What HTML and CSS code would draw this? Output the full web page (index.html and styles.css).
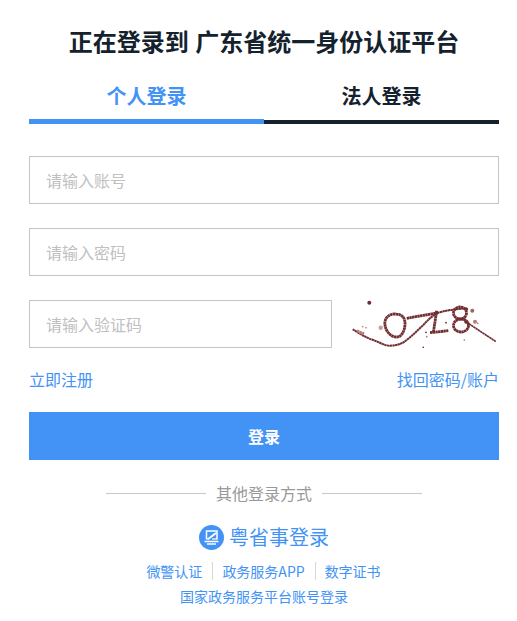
FILE: index.html
```html
<!DOCTYPE html>
<html lang="zh-CN">
<head>
  <meta charset="UTF-8" />
  <title>统一身份认证平台</title>
  <link rel="stylesheet" href="styles.css">
</head>
<body>
  <div class="login">
    <h1 class="title">正在登录到 广东省统一身份认证平台</h1>
    <div class="tabs">
      <div class="tab active">个人登录</div>
      <div class="tab">法人登录</div>
    </div>
    <div class="field"><input class="input" placeholder="请输入账号"></div>
    <div class="field"><input class="input" placeholder="请输入密码"></div>
    <div class="field captcha-row">
      <input class="input captcha-input" placeholder="请输入验证码">
      <svg class="captcha" width="150" height="48" viewBox="0 0 150 48">
        <g fill="none" stroke="#702c30" stroke-width="2.8" stroke-dasharray="2.4 0.3">
          <path d="M3.7 29.3 C10 33 17 38 24.3 40 C30 42 36 46 41 45.7 C48 45.5 53 44 57.7 40 C64 35 69 30 74.3 25 C79 20 83 16 87.7 13.3 C97 10 108 9 117.7 8.3" stroke-width="2"/>
          <path d="M46 14 C39 14 35 19 36 25 C37 32 42 37 47.7 37 C53 37 56 30 56 23.3 C56 17 52 14 46 14Z"/>
          <path d="M57.7 18.3 L89.3 12.7"/>
          <path d="M87.7 10.7 L84.3 32.7"/>
          <path d="M81 32.7 L99.3 30.7"/>
          <ellipse cx="111" cy="13" rx="6.5" ry="6"/>
          <ellipse cx="112" cy="25.5" rx="7.5" ry="6.5"/>
          <path d="M117.7 22.3 L147 41.7" stroke-width="1.6"/>
          <path d="M8 31 L15 34" stroke="#b5797b" stroke-width="3"/>
        </g>
        <g fill="#702c30">
          <circle cx="20.3" cy="2.7" r="2"/>
          <circle cx="31.7" cy="27.7" r="2.2" fill="#d09a9c"/>
          <circle cx="13.7" cy="26.7" r="0.9" fill="#c98a8c"/>
          <circle cx="17" cy="27.7" r="0.9" fill="#c98a8c"/>
          <circle cx="123.3" cy="10.7" r="2" fill="#a85f62"/>
          <circle cx="126" cy="21.7" r="2" fill="#b87a7c"/>
          <circle cx="117.7" cy="9" r="1.5"/>
          <circle cx="77" cy="32.3" r="0.9"/>
          <circle cx="77.7" cy="36.7" r="0.9" fill="#b87a7c"/>
          <circle cx="74.3" cy="47.3" r="0.8"/>
          <circle cx="115.3" cy="40" r="0.8" fill="#a85f62"/>
          <circle cx="128.7" cy="23.3" r="0.9" fill="#b87a7c"/>
          <circle cx="97" cy="22.7" r="0.9"/>
          <circle cx="117" cy="22" r="1.8"/>
        </g>
      </svg>
    </div>
    <div class="links">
      <a class="link">立即注册</a>
      <a class="link">找回密码/账户</a>
    </div>
    <button class="submit">登录</button>
    <div class="other"><span class="other-text">其他登录方式</span></div>
    <div class="yss">
      <svg class="yss-icon" width="25" height="25" viewBox="0 0 25 25">
        <circle cx="12.5" cy="12.5" r="12.5" fill="#4293f5"/>
        <path d="M7.5 14.5 V6 H18 V14.5" fill="none" stroke="#fff" stroke-width="1.5"/>
        <path d="M8.5 14.5 L17 8" fill="none" stroke="#fff" stroke-width="2"/>
        <path d="M13 14 H18" fill="none" stroke="#fff" stroke-width="1.2"/>
        <path d="M5.5 16.5 H19.5 M8 19 H17" fill="none" stroke="#fff" stroke-width="1.4"/>
      </svg>
      <span>粤省事登录</span>
    </div>
    <div class="methods">
      <a class="method">微警认证</a>
      <a class="method">政务服务APP</a>
      <a class="method">数字证书</a>
    </div>
    <a class="national">国家政务服务平台账号登录</a>
  </div>
</body>
</html>
```

FILE: styles.css
```css
* {
  box-sizing: border-box;
}
body {
  margin: 0;
  background: #fff;
  font-family: "Noto Sans CJK SC", "Liberation Sans", sans-serif;
}
.login {
  width: 470px;
  margin-left: 29px;
  padding-top: 27px;
}
.title {
  margin: 0;
  font-family: "Liberation Sans", "Noto Sans CJK SC", sans-serif;
  font-size: 24px;
  line-height: 32px;
  font-weight: bold;
  text-align: center;
  color: #14222e;
}
.tabs {
  display: flex;
  margin-top: 17px;
}
.tab {
  width: 50%;
  height: 48px;
  font-family: "Liberation Sans", "Noto Sans CJK SC", sans-serif;
  line-height: 42px;
  font-size: 20px;
  font-weight: bold;
  text-align: center;
  color: #14222e;
  border-bottom: 4px solid #14222e;
}
.tab.active {
  color: #4293f5;
  border-bottom: 5px solid #4293f5;
}
.field {
  margin-top: 24px;
}
.tabs + .field {
  margin-top: 32px;
}
.input {
  display: block;
  width: 100%;
  height: 48px;
  padding: 0 16px;
  border: 1px solid #c4c4c4;
  outline: none;
  font-family: inherit;
  font-size: 16px;
}
.input::placeholder {
  color: #c0c0c0;
}
.captcha-row {
  display: flex;
  justify-content: space-between;
  align-items: center;
}
.captcha-input {
  width: 303px;
}
.links {
  display: flex;
  justify-content: space-between;
  margin-top: 20px;
  line-height: 22px;
  font-size: 16px;
}
.link {
  color: #4293f5;
}
.submit {
  display: block;
  width: 100%;
  height: 48px;
  margin-top: 22px;
  border: none;
  background: #4293f5;
  color: #fff;
  font-family: inherit;
  font-size: 16px;
  font-weight: bold;
}
.other {
  display: flex;
  align-items: center;
  justify-content: center;
  margin-top: 23px;
  line-height: 20px;
}
.other::before,
.other::after {
  content: "";
  width: 100px;
  height: 1px;
  background: #c8c8c8;
}
.other-text {
  padding: 0 10px;
  font-size: 16px;
  color: #999;
}
.yss {
  display: flex;
  align-items: center;
  justify-content: center;
  gap: 5px;
  margin-top: 21px;
  font-size: 20px;
  line-height: 26px;
  color: #4293f5;
}
.methods {
  display: flex;
  justify-content: center;
  margin-top: 12px;
  font-size: 14px;
  line-height: 18px;
}
.method {
  padding: 0 10px 0 9px;
  color: #4293f5;
  border-left: 1px solid #d8d8d8;
}
.method:first-child {
  border-left: none;
}
.national {
  display: block;
  margin-top: 7px;
  font-size: 14px;
  line-height: 18px;
  text-align: center;
  color: #4293f5;
}
```
